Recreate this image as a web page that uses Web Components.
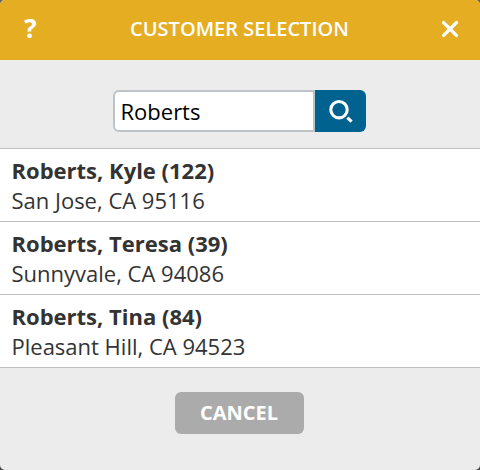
<!DOCTYPE html>
<html lang="en">
<head>
<meta charset="utf-8">
<title>Customer Selection</title>
<style>
  body {
    margin: 0;
    background: linear-gradient(#66625e, #444);
    font-family: "Open Sans", "Noto Sans", sans-serif;
  }
</style>
</head>
<body>
<modal-dialog heading="CUSTOMER SELECTION">
  <search-field value="Roberts"></search-field>
  <customer-list slot="list">
    <customer-row name="Roberts, Kyle (122)">San Jose, CA 95116</customer-row>
    <customer-row name="Roberts, Teresa (39)">Sunnyvale, CA 94086</customer-row>
    <customer-row name="Roberts, Tina (84)">Pleasant Hill, CA 94523</customer-row>
  </customer-list>
  <action-button slot="actions">CANCEL</action-button>
</modal-dialog>

<script>
const createTemplate = (html) => {
  const template = document.createElement("template");
  template.innerHTML = html;
  return template;
};

const dialogTemplate = createTemplate(`
  <style>
    :host {
      display: flex;
      flex-direction: column;
      box-sizing: border-box;
      width: 480px;
      height: 470px;
      border-radius: 5px;
      overflow: hidden;
      background: #ececec;
      color: #333;
    }

    header {
      display: grid;
      grid-template-columns: 60px 1fr 60px;
      align-items: center;
      justify-items: center;
      height: 60px;
      background: #e5ae22;
      color: #fff;
    }

    h1 {
      margin: 0;
      font-size: 20px;
      font-weight: 600;
      line-height: 28px;
      padding-block-end: 3px;
      padding-inline-end: 1px;
      white-space: nowrap;
    }

    button {
      display: flex;
      align-items: center;
      justify-content: center;
      width: 60px;
      height: 60px;
      padding: 0;
      border: 0;
      background: none;
      color: inherit;
      font: 700 26px/36px "Open Sans", sans-serif;
    }

    .help {
      box-sizing: border-box;
      padding-block-end: 4px;
      padding-inline-start: 1px;
    }

    .close {
      box-sizing: border-box;
      padding-block-end: 2px;
    }

    .search {
      display: flex;
      justify-content: center;
      padding: 30px 2px 16px 0;
    }

    footer {
      display: flex;
      justify-content: center;
      padding: 24px 2px 0 0;
    }
  </style>
  <header>
    <button class="help" aria-label="Help">?</button>
    <h1></h1>
    <button class="close" aria-label="Close">
      <svg width="18" height="18" viewBox="0 0 18 18" fill="none" stroke="#fff" stroke-width="3.4" stroke-linecap="round">
        <path d="M2.6 2.6L15.4 15.4M15.4 2.6L2.6 15.4"/>
      </svg>
    </button>
  </header>
  <div class="search"><slot></slot></div>
  <slot name="list"></slot>
  <footer><slot name="actions"></slot></footer>
`);

class ModalDialog extends HTMLElement {
  constructor() {
    super();
    const shadow = this.attachShadow({ mode: "open" });
    shadow.appendChild(dialogTemplate.content.cloneNode(true));
    this.headingEl = shadow.querySelector("h1");
  }

  connectedCallback() {
    this.headingEl.textContent = this.getAttribute("heading") || "";
  }
}

const searchTemplate = createTemplate(`
  <style>
    :host {
      display: flex;
      width: 253px;
      height: 42px;
    }

    input {
      box-sizing: border-box;
      width: 202px;
      height: 42px;
      margin: 0;
      padding: 0 6px;
      border: 2px solid #bdc3c7;
      border-radius: 6px 0 0 6px;
      outline: none;
      background: #fff;
      color: #000;
      font: 400 22px/30px "Open Sans", sans-serif;
    }

    button {
      display: flex;
      align-items: center;
      justify-content: center;
      width: 51px;
      height: 42px;
      padding: 0;
      border: 0;
      border-radius: 0 6px 6px 0;
      background: #00628f;
    }
  </style>
  <input type="text" aria-label="Search customers">
  <button aria-label="Search">
    <svg width="25" height="24" viewBox="0 0 25 24" fill="none" stroke="#fff">
      <circle cx="11" cy="10.7" r="8.2" stroke-width="3.1"/>
      <path d="M19.4 18.7L23.6 22.7" stroke-width="3.2"/>
    </svg>
  </button>
`);

class SearchField extends HTMLElement {
  constructor() {
    super();
    const shadow = this.attachShadow({ mode: "open" });
    shadow.appendChild(searchTemplate.content.cloneNode(true));
    this.input = shadow.querySelector("input");
  }

  connectedCallback() {
    this.input.value = this.getAttribute("value") || "";
  }
}

const listTemplate = createTemplate(`
  <style>
    :host {
      display: block;
      border-top: 1px solid #bfbfbf;
    }
  </style>
  <slot></slot>
`);

class CustomerList extends HTMLElement {
  constructor() {
    super();
    this.attachShadow({ mode: "open" }).appendChild(listTemplate.content.cloneNode(true));
  }
}

const rowTemplate = createTemplate(`
  <style>
    :host {
      display: block;
      box-sizing: border-box;
      height: 73px;
      padding: 6px 11.5px 0;
      border-bottom: 1px solid #bfbfbf;
      background: #fff;
      font-size: 22px;
      line-height: 30px;
      white-space: nowrap;
    }

    .name {
      font-weight: 700;
    }

    .address {
      font-weight: 400;
    }
  </style>
  <div class="name"></div>
  <div class="address"><slot></slot></div>
`);

class CustomerRow extends HTMLElement {
  constructor() {
    super();
    const shadow = this.attachShadow({ mode: "open" });
    shadow.appendChild(rowTemplate.content.cloneNode(true));
    this.nameEl = shadow.querySelector(".name");
  }

  connectedCallback() {
    this.nameEl.textContent = this.getAttribute("name") || "";
  }
}

const buttonTemplate = createTemplate(`
  <style>
    :host {
      display: block;
    }

    button {
      width: 129px;
      height: 42px;
      padding: 0;
      border: 0;
      border-radius: 6px;
      background: #ababab;
      color: #fff;
      font: 700 20px/28px "Open Sans", sans-serif;
    }
  </style>
  <button><slot></slot></button>
`);

class ActionButton extends HTMLElement {
  constructor() {
    super();
    this.attachShadow({ mode: "open" }).appendChild(buttonTemplate.content.cloneNode(true));
  }
}

customElements.define("modal-dialog", ModalDialog);
customElements.define("search-field", SearchField);
customElements.define("customer-list", CustomerList);
customElements.define("customer-row", CustomerRow);
customElements.define("action-button", ActionButton);
</script>
</body>
</html>
